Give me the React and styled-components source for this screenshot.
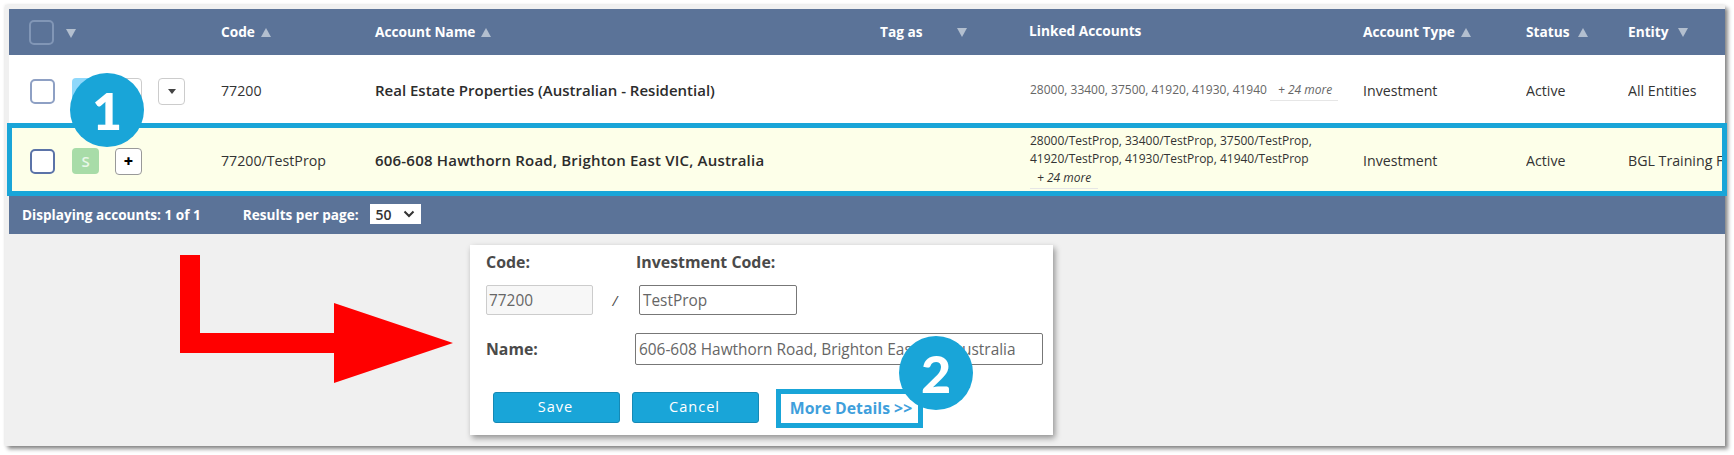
import styled, { createGlobalStyle } from "styled-components";

const BLUE = "#19a5d8";
const SLATE = "#5b7398";
const COLUMNS = "212px 154px 505px 150px 333px 163px 102px 97px";

const GlobalStyle = createGlobalStyle`
  html, body {
    margin: 0;
    padding: 0;
    background: #fff;
    font-family: "Open Sans", "Liberation Sans", sans-serif;
  }
  html {
    overflow: hidden;
  }
  body {
    height: 100vh;
  }
`;

const Frame = styled.div`
  position: relative;
  box-sizing: border-box;
  margin: 5px 0 0 5px;
  width: 1720px;
  height: 441px;
  padding: 4px 0 0 4px;
  background: #f0f0f0;
  box-shadow: 3px 3px 4px rgba(0, 0, 0, 0.45), 0 0 3px rgba(0, 0, 0, 0.12);
`;

const Grid = styled.div`
  display: grid;
  grid-template-columns: ${COLUMNS};
  align-items: center;
`;

const HeaderRow = styled(Grid)`
  height: 46px;
  background: ${SLATE};
  color: #fff;
  font-size: 13.7px;
  font-weight: 700;
`;

const HeaderCell = styled.div`
  display: flex;
  align-items: center;
  gap: ${(p) => p.$gap || 6}px;
  padding-bottom: ${(p) => p.$lift || 2}px;
  margin-left: ${(p) => p.$shift || 0}px;
  white-space: nowrap;
`;

const Caret = styled.span`
  width: 0;
  height: 0;
  margin-top: 2px;
  border-left: 5.5px solid transparent;
  border-right: 5.5px solid transparent;
  ${(p) => (p.$up ? "border-bottom" : "border-top")}: 9px solid #b3bfcf;
`;

const HeaderSelect = styled.div`
  display: flex;
  align-items: center;
  gap: 12px;
  padding-left: 20px;
`;

const Check = styled.span`
  display: block;
  box-sizing: border-box;
  width: 25px;
  height: 25px;
  border-radius: 5px;
  border: 2px solid ${(p) => p.$color};
  background: ${(p) => p.$bg || "#fff"};
`;

const Row = styled(Grid)`
  position: relative;
  box-sizing: border-box;
  height: ${(p) => p.$height}px;
  padding-top: ${(p) => p.$pad}px;
  background: ${(p) => p.$bg};
  color: #333;
  font-size: 14.2px;
`;

const HighlightRow = styled(Row)`
  &::after {
    content: "";
    position: absolute;
    top: 0;
    bottom: 0;
    left: -2px;
    right: -2px;
    border: 5px solid ${BLUE};
    pointer-events: none;
  }
`;

const SelectCell = styled.div`
  display: flex;
  align-items: center;
  padding-left: 21px;
`;

const Badge = styled.span`
  box-sizing: border-box;
  display: flex;
  align-items: center;
  justify-content: center;
  width: 27px;
  height: 26px;
  margin-left: 17px;
  border-radius: 4px;
  background: ${(p) => p.$bg};
  color: #e8f7e8;
  font-size: 15px;
  font-weight: 600;
`;

const SmallButton = styled.span`
  box-sizing: border-box;
  display: flex;
  align-items: center;
  justify-content: center;
  width: 27px;
  height: 27px;
  margin-left: ${(p) => p.$left}px;
  border-radius: 4px;
  border: 1px solid ${(p) => p.$border};
  background: #fff;
  color: #000;
  font-size: 16px;
  font-weight: 800;
`;

const SmallCaret = styled.span`
  width: 0;
  height: 0;
  border-left: 4.5px solid transparent;
  border-right: 4.5px solid transparent;
  border-top: 5px solid #444;
`;

const Cell = styled.div`
  padding-bottom: 2px;
  white-space: nowrap;
  overflow: hidden;
`;

const NameCell = styled(Cell)`
  font-size: 15px;
  font-weight: 600;
  letter-spacing: ${(p) => p.$spacing || 0}px;
  color: #2c2c2c;
`;

const Linked = styled.div`
  padding-bottom: 2px;
  font-size: 12px;
  line-height: 18px;
  color: ${(p) => p.$color};
  white-space: nowrap;
`;

const More = styled.span`
  display: inline-block;
  box-sizing: border-box;
  width: 68px;
  padding-left: ${(p) => p.$pad}px;
  margin-left: ${(p) => p.$left}px;
  border-bottom: 1px solid #e6e6e6;
  font-style: italic;
  line-height: 20px;
`;

const Footer = styled.div`
  display: flex;
  align-items: center;
  box-sizing: border-box;
  height: 38px;
  padding: 0 0 2px 13px;
  background: ${SLATE};
  color: #fff;
  font-size: 13.6px;
  font-weight: 700;
`;

const PageLabel = styled.span`
  margin-left: 42px;
`;

const PageSelect = styled.span`
  box-sizing: border-box;
  display: flex;
  align-items: center;
  justify-content: space-between;
  width: 51px;
  height: 20px;
  margin-left: 11px;
  padding: 0 6px;
  background: #fff;
  color: #333;
  font-size: 14px;
  font-weight: 600;
`;

const Below = styled.div`
  display: flex;
  padding: 11px 0 0 461px;
`;

const Popup = styled.div`
  position: relative;
  box-sizing: border-box;
  width: 583px;
  height: 190px;
  padding: 7px 10px 0 16px;
  background: #fff;
  box-shadow: 2px 3px 6px rgba(0, 0, 0, 0.4);
  color: #4a4a4a;
`;

const LabelRow = styled.div`
  display: flex;
  height: 20px;
  align-items: center;
  font-size: 15.9px;
  font-weight: 700;
`;

const CodeLabel = styled.span`
  width: 150px;
`;

const CodeRow = styled.div`
  display: flex;
  align-items: center;
  margin-top: 13px;
`;

const Field = styled.div`
  box-sizing: border-box;
  display: flex;
  align-items: center;
  width: ${(p) => p.$width}px;
  height: ${(p) => p.$height}px;
  padding-left: ${(p) => p.$pad}px;
  border: 1px solid ${(p) => p.$border};
  border-radius: 2px;
  background: ${(p) => p.$bg || "#fff"};
  color: #666;
  font-size: 15.4px;
  white-space: nowrap;
`;

const Slash = styled.span`
  box-sizing: border-box;
  width: 46px;
  padding-right: 2px;
  text-align: center;
  font-size: 14px;
  font-style: italic;
`;

const NameRow = styled.div`
  display: flex;
  align-items: center;
  margin-top: 18px;
`;

const NameLabel = styled.span`
  width: 149px;
  font-size: 15.8px;
  font-weight: 700;
`;

const ActionRow = styled.div`
  display: flex;
  align-items: flex-start;
  margin: 24px 0 0 7px;
`;

const ActionButton = styled.span`
  box-sizing: border-box;
  display: flex;
  align-items: center;
  justify-content: center;
  width: 127px;
  height: 31px;
  margin: 3px 12px 0 0;
  padding: 0 2px 4px 0;
  border: 1px solid #1589b5;
  border-radius: 3px;
  background: ${BLUE};
  color: #fff;
  font-size: 14.6px;
  letter-spacing: 1px;
`;

const MoreDetails = styled.span`
  box-sizing: border-box;
  display: flex;
  align-items: center;
  justify-content: center;
  width: 147px;
  height: 39px;
  margin-left: 5px;
  padding: 0 0 1px 3px;
  border: 5px solid ${BLUE};
  background: #fff;
  color: #3f9fdc;
  font-size: 15.8px;
  font-weight: 700;
`;

const Callout = styled.span`
  position: absolute;
  left: ${(p) => p.$left}px;
  top: ${(p) => p.$top}px;
  display: flex;
  align-items: center;
  justify-content: center;
  width: 74px;
  height: 74px;
  border-radius: 50%;
  background: ${BLUE};
  color: #fff;
  font-family: "Lato", sans-serif;
  font-size: 52px;
  font-weight: 900;
`;

const ArrowSvg = styled.svg`
  position: absolute;
  left: 170px;
  top: 245px;
`;

const Chevron = () => (
  <svg width="12" height="8" viewBox="0 0 12 8">
    <path d="M1.5 1.5 L6 6 L10.5 1.5" fill="none" stroke="#333" strokeWidth="2" />
  </svg>
);

export default function App() {
  return (
    <>
      <GlobalStyle />
      <Frame>
        <HeaderRow>
          <HeaderSelect>
            <Check $color="#8196b6" $bg="transparent" />
            <Caret />
          </HeaderSelect>
          <HeaderCell>Code <Caret $up /></HeaderCell>
          <HeaderCell>Account Name <Caret $up /></HeaderCell>
          <HeaderCell $gap={34}>Tag as <Caret /></HeaderCell>
          <HeaderCell $lift={4} $shift={-1}>Linked Accounts</HeaderCell>
          <HeaderCell>Account Type <Caret $up /></HeaderCell>
          <HeaderCell $gap={8}>Status <Caret $up /></HeaderCell>
          <HeaderCell $gap={9}>Entity <Caret /></HeaderCell>
        </HeaderRow>

        <Row $height={68} $bg="#fff" $pad={4}>
          <SelectCell>
            <Check $color="#8ea0c4" />
            <Badge $bg="#8fd8fb" />
            <SmallButton $left={16} $border="#ccc" />
            <SmallButton $left={16} $border="#ccc"><SmallCaret /></SmallButton>
          </SelectCell>
          <Cell>77200</Cell>
          <NameCell>Real Estate Properties (Australian - Residential)</NameCell>
          <Cell />
          <Linked $color="#666">
            28000, 33400, 37500, 41920, 41930, 41940
            <More $pad={8} $left={3}>+ 24 more</More>
          </Linked>
          <Cell>Investment</Cell>
          <Cell>Active</Cell>
          <Cell>All Entities</Cell>
        </Row>

        <HighlightRow $height={73} $bg="#fdffe9" $pad={3}>
          <SelectCell>
            <Check $color="#5b73a8" />
            <Badge $bg="#a8dca8">S</Badge>
            <SmallButton $left={16} $border="#999">+</SmallButton>
          </SelectCell>
          <Cell>77200/TestProp</Cell>
          <NameCell $spacing={0.2}>606-608 Hawthorn Road, Brighton East VIC, Australia</NameCell>
          <Cell />
          <Linked $color="#333">
            28000/TestProp, 33400/TestProp, 37500/TestProp,<br />
            41920/TestProp, 41930/TestProp, 41940/TestProp<br />
            <More $pad={7} $left={0}>+ 24 more</More>
          </Linked>
          <Cell>Investment</Cell>
          <Cell>Active</Cell>
          <Cell>BGL Training Fund</Cell>
        </HighlightRow>

        <Footer>
          <span>Displaying accounts: 1 of 1</span>
          <PageLabel>Results per page:</PageLabel>
          <PageSelect>50 <Chevron /></PageSelect>
        </Footer>

        <Below>
          <Popup>
            <LabelRow>
              <CodeLabel>Code:</CodeLabel>
              <span>Investment Code:</span>
            </LabelRow>
            <CodeRow>
              <Field $width={107} $height={30} $pad={2} $border="#ccc" $bg="#f7f7f7">77200</Field>
              <Slash>/</Slash>
              <Field $width={158} $height={30} $pad={3} $border="#777">TestProp</Field>
            </CodeRow>
            <NameRow>
              <NameLabel>Name:</NameLabel>
              <Field $width={408} $height={32} $pad={3} $border="#777">
                606-608 Hawthorn Road, Brighton East VIC, Australia
              </Field>
            </NameRow>
            <ActionRow>
              <ActionButton>Save</ActionButton>
              <ActionButton>Cancel</ActionButton>
              <MoreDetails>More Details &gt;&gt;</MoreDetails>
            </ActionRow>
            <Callout $left={429} $top={91}>2</Callout>
          </Popup>
        </Below>

        <ArrowSvg width="290" height="140" viewBox="0 0 290 140">
          <path d="M5 5 H25 V83 H159 V53 L278 93 L159 133 V103 H5 Z" fill="#ff0000" />
        </ArrowSvg>
        <Callout $left={65} $top={68}>1</Callout>
      </Frame>
    </>
  );
}
